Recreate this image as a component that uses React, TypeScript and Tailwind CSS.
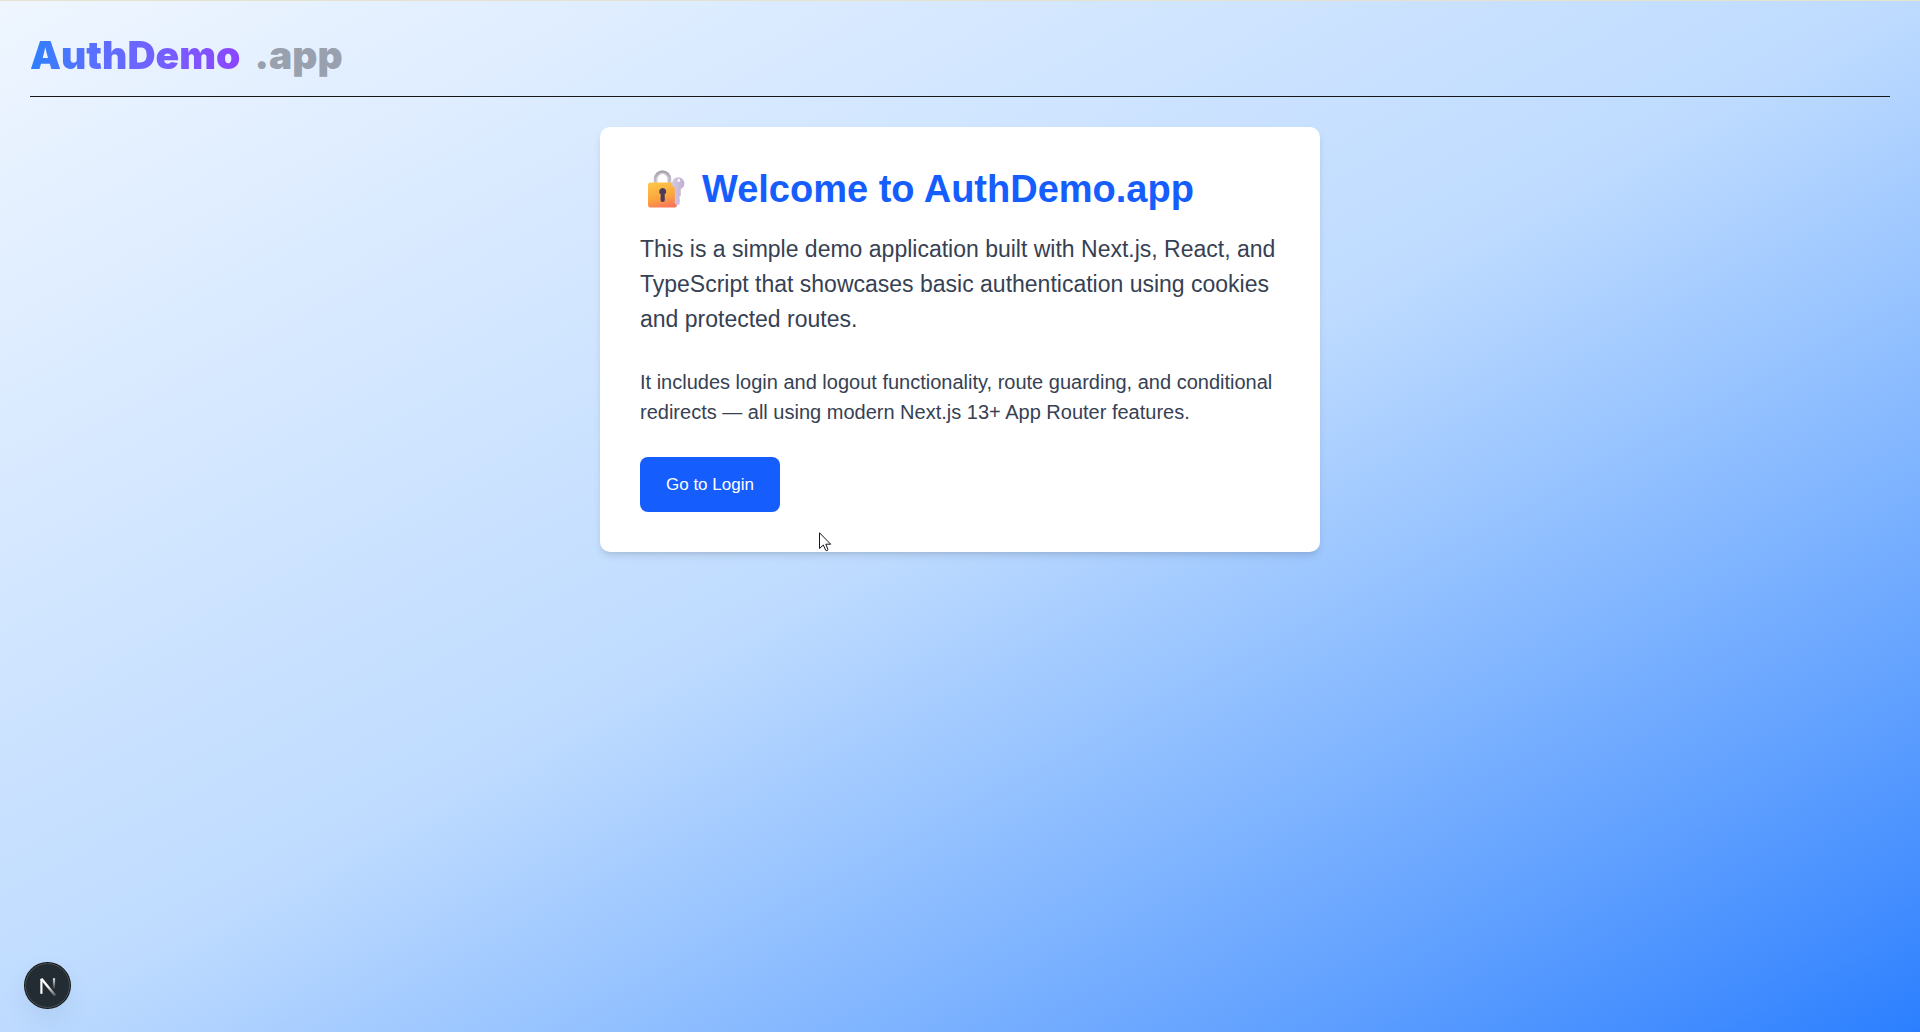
function LockWithKeyIcon() {
  return (
    <svg viewBox="0 0 48 48" className="h-12 w-12 shrink-0" aria-hidden="true">
      <defs>
        <linearGradient id="lock-body" x1="0.3" y1="0" x2="0.6" y2="1">
          <stop offset="0" stopColor="#fcc546" />
          <stop offset="0.6" stopColor="#fba43f" />
          <stop offset="1" stopColor="#f9765a" />
        </linearGradient>
        <linearGradient id="lock-shackle" x1="0" y1="0" x2="0" y2="1">
          <stop offset="0" stopColor="#a9a3ad" />
          <stop offset="1" stopColor="#cdc5d6" />
        </linearGradient>
        <linearGradient id="lock-key" x1="0" y1="0" x2="1" y2="0">
          <stop offset="0" stopColor="#d6c8e2" />
          <stop offset="1" stopColor="#bfb0d2" />
        </linearGradient>
      </defs>
      <path d="M15.600 18v-5a6.900 6.900 0 0 1 13.800 0v5" fill="none" stroke="url(#lock-shackle)" strokeWidth="3.600" />
      <path d="M16.800 16v-3a5.700 5.700 0 0 1 11.400 0" fill="none" stroke="#dcd6e3" strokeWidth="0.900" />
      <rect x="8" y="16.500" width="29" height="25" rx="2.800" fill="url(#lock-body)" />
      <path d="M22.700 22a3.600 3.600 0 0 0-1.900 6.600l-.3 5.200a2.200 2.200 0 0 0 4.400 0l-.3-5.200A3.600 3.600 0 0 0 22.700 22z" fill="#4b3a5a" />
      <path
        fillRule="evenodd"
        d="M38.300 11.500a5.700 5.700 0 0 0-3.500 10.500V36.700q0 1.800 1.800 2.100h1.500q1.400 0 1.700-1.500l-.4-1.500.9-1.400-.8-1.400V30.500l1.300-1V23A6 6 0 0 0 38.300 11.500zM38.800 13.100a1.400 1.400 0 1 1 0 2.800 1.400 1.400 0 0 1 0-2.800z"
        fill="url(#lock-key)"
      />
    </svg>
  );
}

function DevToolsButton() {
  return (
    <button
      type="button"
      aria-label="Open Next.js Dev Tools"
      className="fixed bottom-6 left-[25px] flex h-[45px] w-[45px] items-center justify-center rounded-full border border-[#4c5258] bg-[#242c33] shadow-[0_0_0_1px_#111518,0_12px_24px_rgba(60,90,140,0.1)]"
    >
      <svg viewBox="0 0 20 20" className="h-6 w-6" fill="none" aria-hidden="true">
        <defs>
          <linearGradient id="n-diagonal" x1="10" y1="10" x2="17" y2="19" gradientUnits="userSpaceOnUse">
            <stop stopColor="#ffffff" />
            <stop offset="1" stopColor="#ffffff" stopOpacity="0.1" />
          </linearGradient>
          <linearGradient id="n-stem" x1="16" y1="2" x2="16" y2="13" gradientUnits="userSpaceOnUse">
            <stop stopColor="#ffffff" />
            <stop offset="1" stopColor="#ffffff" stopOpacity="0" />
          </linearGradient>
        </defs>
        <path d="M4.500 16.500V4" stroke="#ffffff" strokeWidth="1.800" />
        <path d="M4.500 4L16 18" stroke="url(#n-diagonal)" strokeWidth="2" />
        <path d="M15 3.500v9" stroke="url(#n-stem)" strokeWidth="1.800" />
      </svg>
    </button>
  );
}

function Pointer() {
  return (
    <svg
      viewBox="0 0 13 20"
      className="pointer-events-none absolute bottom-0 left-[219px] h-5 w-[13px]"
      aria-hidden="true"
    >
      <path
        d="M.5.800V16.500L4.300 13l2.400 5.300q1 .9 2.300-.6L6.800 12.200h4.900z"
        fill="#ffffff"
        stroke="#14141c"
        strokeWidth="1"
      />
    </svg>
  );
}

export default function App() {
  return (
    <div className="min-h-screen border-t border-[#e5e2d0] bg-linear-to-br from-blue-50 via-blue-200 to-blue-500 p-[30px] font-['Liberation_Sans',Arial,sans-serif]">
      <header className="border-b border-[#171717] pb-[18px]">
        <a href="#" className="inline-flex gap-[14px] align-top font-['Arial_Black','Inter',sans-serif] text-[39px] leading-[47px] font-black">
          <span className="bg-linear-to-r from-blue-500 to-[#8b45ff] bg-clip-text text-transparent">AuthDemo</span>
          <span className="text-[#99a1af]">.app</span>
        </a>
      </header>

      <main className="relative mx-auto mt-[30px] max-w-[720px] rounded-[10px] bg-white p-10 shadow-[0_5px_8px_-1px_rgba(0,0,0,0.1),0_3px_5px_-3px_rgba(0,0,0,0.1)]">
        <h1 className="mb-5 flex h-[45px] items-center gap-[14px] text-[38px] leading-[45px] font-bold text-[#155dfc]">
          <LockWithKeyIcon />
          Welcome to AuthDemo.app
        </h1>
        <p className="mb-[30px] text-[23px] leading-[35px] text-[#364153]">
          This is a simple demo application built with Next.js, React, and TypeScript that showcases basic authentication using
          cookies and protected routes.
        </p>
        <p className="mb-[30px] text-[20px] leading-[30px] text-[#364153]">
          It includes login and logout functionality, route guarding, and conditional redirects — all using modern Next.js 13+
          App Router features.
        </p>
        <button type="button" className="block rounded-lg bg-[#155dfc] px-[26px] py-[15px] text-[17px] leading-[25px] text-white">
          Go to Login
        </button>
        <Pointer />
      </main>

      <DevToolsButton />
    </div>
  );
}
